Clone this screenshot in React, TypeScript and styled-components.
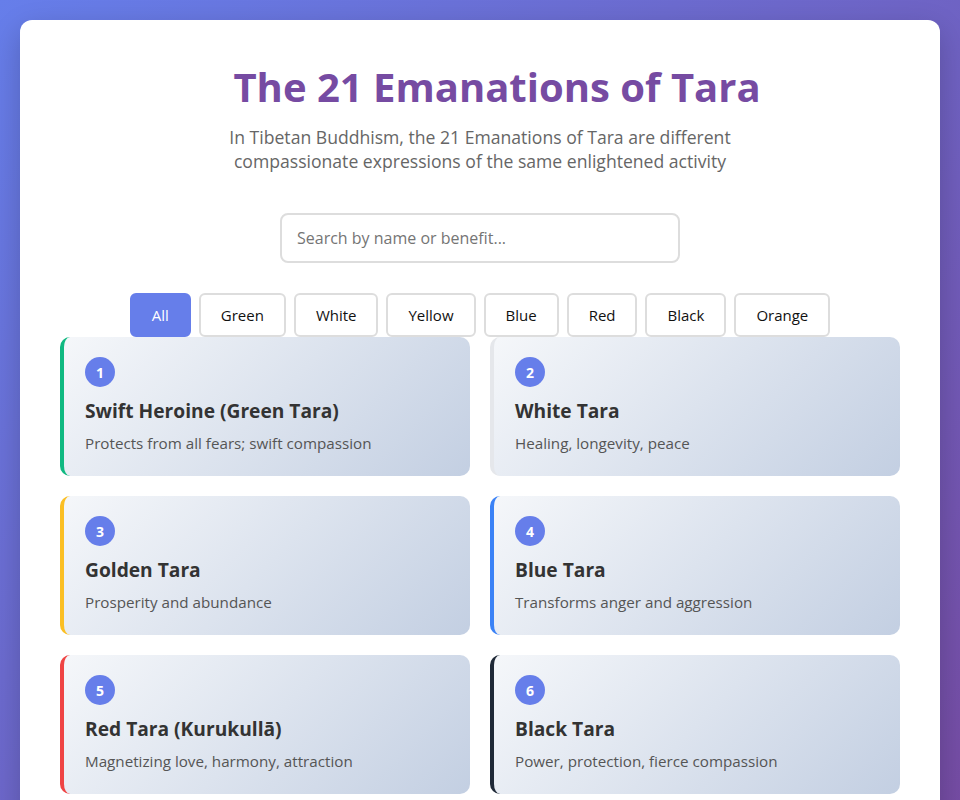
import React, { useState } from "react";
import styled, { createGlobalStyle } from "styled-components";

const GlobalStyle = createGlobalStyle`
  * { box-sizing: border-box; }
  html, body { margin: 0; padding: 0; }
  body {
    font-family: "Open Sans", "Noto Sans", sans-serif;
    background: linear-gradient(135deg, #667eea 0%, #764ba2 100%);
    min-height: 100vh;
    padding: 20px;
  }
`;

const Container = styled.div`
  max-width: 920px;
  margin: 0 auto;
  background: #ffffff;
  border-radius: 12px;
  padding: 40px 40px 40px;
  box-shadow: 0 10px 30px rgba(0, 0, 0, 0.2);
`;

const Header = styled.header`
  text-align: center;
  margin-bottom: 40px;
`;

const Title = styled.h1`
  margin: 3px 0 14px;
  padding-left: 34px;
  font-size: 40px;
  font-weight: 700;
  color: #764ba2;
  line-height: 1.2;
`;

const Subtitle = styled.p`
  margin: 0 auto;
  max-width: 560px;
  font-size: 17.6px;
  line-height: 24px;
  color: #666666;
`;

const SearchWrap = styled.div`
  display: flex;
  justify-content: center;
  margin-bottom: 30px;
`;

const SearchInput = styled.input`
  width: 400px;
  height: 50px;
  padding: 0 15px;
  border: 2px solid #dddddd;
  border-radius: 8px;
  font-family: inherit;
  font-size: 16px;
  color: #333;
  outline: none;
  &::placeholder { color: #757575; }
`;

const Filters = styled.div`
  display: flex;
  justify-content: center;
  gap: 8px;
`;

const FilterButton = styled.button<{ $active?: boolean }>`
  height: 44px;
  padding: 0 20px;
  border: 2px solid ${(p) => (p.$active ? "#667eea" : "#dddddd")};
  background: ${(p) => (p.$active ? "#667eea" : "#ffffff")};
  color: ${(p) => (p.$active ? "#ffffff" : "#111111")};
  border-radius: 6px;
  font-family: inherit;
  font-size: 15px;
  cursor: pointer;
`;

const Grid = styled.div`
  display: grid;
  grid-template-columns: 1fr 1fr;
  gap: 20px;
`;

const Card = styled.div<{ $accent: string }>`
  background: linear-gradient(135deg, #f5f7fa 0%, #c3cfe2 100%);
  border-left: 4px solid ${(p) => p.$accent};
  border-radius: 10px;
  padding: 20px 20px 21px 21px;
`;

const Number = styled.div`
  width: 30px;
  height: 30px;
  border-radius: 50%;
  background: #667eea;
  color: #ffffff;
  font-weight: 700;
  font-size: 14px;
  display: flex;
  align-items: center;
  justify-content: center;
  margin-bottom: 11px;
`;

const Name = styled.h3`
  margin: 0 0 8px;
  font-size: 19.2px;
  font-weight: 700;
  line-height: 26px;
  color: #333333;
`;

const Desc = styled.p`
  margin: 0;
  font-size: 15.2px;
  line-height: 23px;
  color: #555555;
`;

const taras = [
  { n: 1, name: "Swift Heroine (Green Tara)", desc: "Protects from all fears; swift compassion", color: "#10b981" },
  { n: 2, name: "White Tara", desc: "Healing, longevity, peace", color: "#e5e7eb" },
  { n: 3, name: "Golden Tara", desc: "Prosperity and abundance", color: "#fbbf24" },
  { n: 4, name: "Blue Tara", desc: "Transforms anger and aggression", color: "#3b82f6" },
  { n: 5, name: "Red Tara (Kurukullā)", desc: "Magnetizing love, harmony, attraction", color: "#ef4444" },
  { n: 6, name: "Black Tara", desc: "Power, protection, fierce compassion", color: "#1f2937" },
];

const filters = ["All", "Green", "White", "Yellow", "Blue", "Red", "Black", "Orange"];

export default function App() {
  const [active, setActive] = useState("All");
  return (
    <>
      <GlobalStyle />
      <Container>
        <Header>
          <Title>The 21 Emanations of Tara</Title>
          <Subtitle>
            In Tibetan Buddhism, the 21 Emanations of Tara are different compassionate expressions of the same enlightened activity
          </Subtitle>
        </Header>
        <SearchWrap>
          <SearchInput placeholder="Search by name or benefit..." />
        </SearchWrap>
        <Filters>
          {filters.map((f) => (
            <FilterButton key={f} $active={f === active} onClick={() => setActive(f)}>
              {f}
            </FilterButton>
          ))}
        </Filters>
        <Grid>
          {taras.map((t) => (
            <Card key={t.n} $accent={t.color}>
              <Number>{t.n}</Number>
              <Name>{t.name}</Name>
              <Desc>{t.desc}</Desc>
            </Card>
          ))}
        </Grid>
      </Container>
    </>
  );
}
